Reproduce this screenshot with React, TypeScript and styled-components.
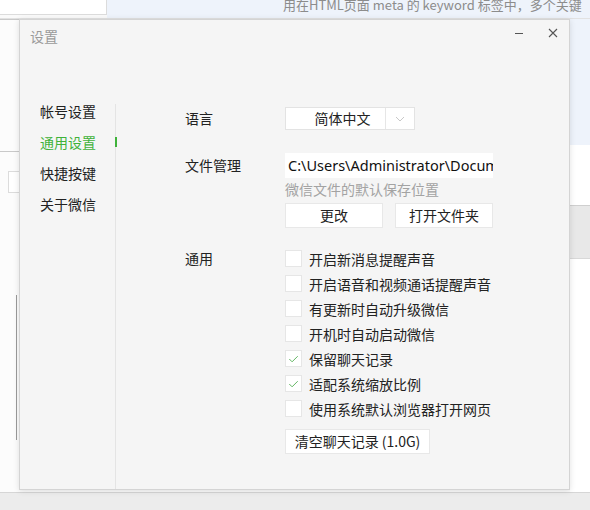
import styled, { createGlobalStyle } from 'styled-components';

const GlobalStyle = createGlobalStyle`
  html, body {
    margin: 0;
    padding: 0;
    background: #fafafa;
  }
  body {
    font-family: "Noto Sans CJK SC", "Noto Sans", sans-serif;
    color: #1f1f1f;
  }
`;

const generalOptions = [
  { label: '开启新消息提醒声音', checked: false },
  { label: '开启语音和视频通话提醒声音', checked: false },
  { label: '有更新时自动升级微信', checked: false },
  { label: '开机时自动启动微信', checked: false },
  { label: '保留聊天记录', checked: true },
  { label: '适配系统缩放比例', checked: true },
  { label: '使用系统默认浏览器打开网页', checked: false },
];

const navItems = ['帐号设置', '通用设置', '快捷按键', '关于微信'];

const App = () => {
  return (
    <>
      <GlobalStyle />
      <Page>
        <TopBar>
          <SearchBox />
          <HintStrip>用在HTML页面 meta 的 keyword 标签中，多个关键</HintStrip>
        </TopBar>
        <Backdrop>
          <LeftRail>
            <RailLine $top={0} />
            <RailLine $top={132} />
            <RailBox />
            <RailEdge />
          </LeftRail>
          <RightRail>
            <RightBand />
          </RightRail>
        </Backdrop>
        <StatusBar />

        <Dialog>
          <DialogHeader>
            <DialogTitle>设置</DialogTitle>
            <WindowButtons>
              <WindowButton aria-label="最小化">
                <svg width="10" height="10" viewBox="0 0 10 10">
                  <line x1="1" y1="5.5" x2="9" y2="5.5" stroke="#555" strokeWidth="1" />
                </svg>
              </WindowButton>
              <WindowButton aria-label="关闭">
                <svg width="10" height="10" viewBox="0 0 10 10">
                  <path d="M1 1 L9 9 M9 1 L1 9" stroke="#555" strokeWidth="1.1" fill="none" />
                </svg>
              </WindowButton>
            </WindowButtons>
          </DialogHeader>

          <DialogBody>
            <Sidebar>
              {navItems.map((item) => (
                <NavItem key={item} $active={item === '通用设置'}>
                  {item}
                </NavItem>
              ))}
            </Sidebar>

            <Content>
              <Row>
                <RowLabel $height={23}>语言</RowLabel>
                <Select>
                  <SelectValue>简体中文</SelectValue>
                  <SelectArrow>
                    <svg width="10" height="6" viewBox="0 0 10 6">
                      <polyline points="1,1 5,5 9,1" fill="none" stroke="#c8c8c8" strokeWidth="1" />
                    </svg>
                  </SelectArrow>
                </Select>
              </Row>

              <Row>
                <RowLabel $height={25}>文件管理</RowLabel>
                <Stack>
                  <PathField>C:\Users\Administrator\Documents\WeChat Files</PathField>
                  <Hint>微信文件的默认保存位置</Hint>
                  <ButtonRow>
                    <PlainButton $width={98}>更改</PlainButton>
                    <PlainButton $width={98}>打开文件夹</PlainButton>
                  </ButtonRow>
                </Stack>
              </Row>

              <Row>
                <RowLabel $height={25}>通用</RowLabel>
                <Stack>
                  {generalOptions.map((opt) => (
                    <CheckRow key={opt.label}>
                      <CheckBox>
                        {opt.checked && (
                          <svg width="16" height="16" viewBox="0 0 16 16">
                            <polyline
                              points="3.5,8 6.5,11 12.5,5"
                              fill="none"
                              stroke="#57b157"
                              strokeWidth="1"
                            />
                          </svg>
                        )}
                      </CheckBox>
                      {opt.label}
                    </CheckRow>
                  ))}
                  <PlainButton $width={145} $spaced>
                    清空聊天记录 (1.0G)
                  </PlainButton>
                </Stack>
              </Row>
            </Content>
          </DialogBody>
        </Dialog>
      </Page>
    </>
  );
};

const Page = styled.div`
  position: relative;
  width: 590px;
  height: 510px;
  display: flex;
  flex-direction: column;
  overflow: hidden;
  background: #fafafa;
`;

const TopBar = styled.div`
  display: flex;
  height: 18px;
  border-bottom: 1px solid #e2e2e2;
`;

const SearchBox = styled.div`
  width: 106px;
  height: 14px;
  background: #fff;
  border-right: 1px solid #dcdcdc;
  border-bottom: 1px solid #dcdcdc;
`;

const HintStrip = styled.div`
  flex: 1;
  background: #eef3fb;
  padding-left: 176px;
  font-size: 13px;
  line-height: 10px;
  color: #8c8c8c;
  white-space: nowrap;
  overflow: hidden;
`;

const Backdrop = styled.div`
  flex: 1;
  display: flex;
  justify-content: space-between;
`;

const LeftRail = styled.div`
  position: relative;
  width: 20px;
  background: #fcfcfc;
`;

const RailLine = styled.div<{ $top: number }>`
  position: absolute;
  left: 0;
  right: 0;
  top: ${(p) => p.$top}px;
  height: 1px;
  background: #c9c9c9;
`;

const RailBox = styled.div`
  position: absolute;
  left: 8px;
  top: 152px;
  width: 12px;
  height: 20px;
  border: 1px solid #dcdcdc;
  border-right: none;
  background: #fff;
`;

const RailEdge = styled.div`
  position: absolute;
  left: 16px;
  top: 276px;
  width: 3px;
  height: 145px;
  border-left: 1px solid #9a9a9a;
`;

const RightRail = styled.div`
  width: 20px;
  display: flex;
  flex-direction: column;
  background: linear-gradient(#eef3fb 0, #eef3fb 126px, #fff 126px);
`;

const RightBand = styled.div`
  margin-top: 186px;
  height: 52px;
  background: #e8e8e8;
  border-top: 1px solid #cfcfcf;
  border-bottom: 1px solid #d8d8d8;
`;

const StatusBar = styled.div`
  height: 17px;
  background: #ececec;
  border-top: 1px solid #d6d6d6;
`;

const Dialog = styled.div`
  position: absolute;
  left: 19px;
  top: 19px;
  width: 551px;
  height: 471px;
  box-sizing: border-box;
  background: #f5f5f5;
  border: 1px solid #d4d4d4;
  box-shadow: 0 1px 6px rgba(0, 0, 0, 0.12);
  display: flex;
  flex-direction: column;
`;

const DialogHeader = styled.div`
  height: 76px;
  display: flex;
  justify-content: space-between;
  align-items: flex-start;
  padding: 5px 11px 0 10px;
  box-sizing: border-box;
`;

const DialogTitle = styled.div`
  font-size: 14px;
  line-height: 22px;
  color: #9a9a9a;
`;

const WindowButtons = styled.div`
  display: flex;
  gap: 24px;
  margin-top: 3px;
`;

const WindowButton = styled.button`
  width: 10px;
  height: 10px;
  padding: 0;
  border: none;
  background: transparent;
  display: flex;
  align-items: center;
  justify-content: center;
  cursor: pointer;
`;

const DialogBody = styled.div`
  flex: 1;
  display: flex;
`;

const Sidebar = styled.nav`
  position: relative;
  width: 96px;
  padding-left: 20px;
  box-sizing: border-box;

  &::before {
    content: '';
    position: absolute;
    right: 0;
    top: 8px;
    bottom: 0;
    width: 1px;
    background: #e4e4e4;
  }
`;

const NavItem = styled.div<{ $active?: boolean }>`
  position: relative;
  font-size: 14px;
  line-height: 31px;
  height: 31px;
  color: ${(p) => (p.$active ? '#3fb23a' : '#222')};
  cursor: pointer;

  ${(p) =>
    p.$active &&
    `
    &::after {
      content: '';
      position: absolute;
      right: -1px;
      top: 10px;
      width: 2px;
      height: 10px;
      background: #3fb23a;
      z-index: 1;
    }
  `}
`;

const Content = styled.div`
  flex: 1;
  padding: 11px 0 0 69px;
  display: flex;
  flex-direction: column;
  gap: 23px;
`;

const Row = styled.div`
  display: flex;
  align-items: flex-start;

  & + & + & {
    margin-top: -5px;
  }
`;

const RowLabel = styled.div<{ $height: number }>`
  width: 100px;
  flex-shrink: 0;
  font-size: 14px;
  line-height: ${(p) => p.$height}px;
  color: #222;
`;

const Stack = styled.div`
  display: flex;
  flex-direction: column;
`;

const Select = styled.div`
  width: 130px;
  height: 23px;
  box-sizing: border-box;
  display: flex;
  background: #fff;
  border: 1px solid #e3e3e3;
`;

const SelectValue = styled.div`
  width: 100px;
  box-sizing: border-box;
  padding-left: 14px;
  text-align: center;
  font-size: 14px;
  line-height: 21px;
  color: #222;
  border-right: 1px solid #e6e6e6;
`;

const SelectArrow = styled.div`
  flex: 1;
  display: flex;
  align-items: center;
  justify-content: center;
`;

const PathField = styled.div`
  width: 208px;
  height: 25px;
  box-sizing: border-box;
  padding-left: 3px;
  background: #fff;
  font-family: "Noto Sans", "Noto Sans CJK SC", sans-serif;
  font-size: 14.5px;
  line-height: 24px;
  color: #111;
  white-space: nowrap;
  overflow: hidden;
`;

const Hint = styled.div`
  font-size: 14px;
  line-height: 22px;
  color: #a3a3a3;
  margin-bottom: 3px;
`;

const ButtonRow = styled.div`
  display: flex;
  gap: 12px;
`;

const PlainButton = styled.button<{ $width: number; $spaced?: boolean }>`
  width: ${(p) => p.$width}px;
  height: 25px;
  padding: 0;
  margin-top: ${(p) => (p.$spaced ? '8px' : '0')};
  background: #fff;
  border: 1px solid #e8e8e8;
  font-family: inherit;
  font-size: 14px;
  line-height: 23px;
  color: #222;
  cursor: pointer;
`;

const CheckRow = styled.label`
  display: flex;
  align-items: center;
  gap: 7px;
  height: 25px;
  font-size: 14px;
  color: #222;
  cursor: pointer;
`;

const CheckBox = styled.span`
  width: 17px;
  height: 17px;
  box-sizing: border-box;
  background: #fff;
  border: 1px solid #e6e6e6;
  display: flex;
  align-items: center;
  justify-content: center;
`;

export default App;
